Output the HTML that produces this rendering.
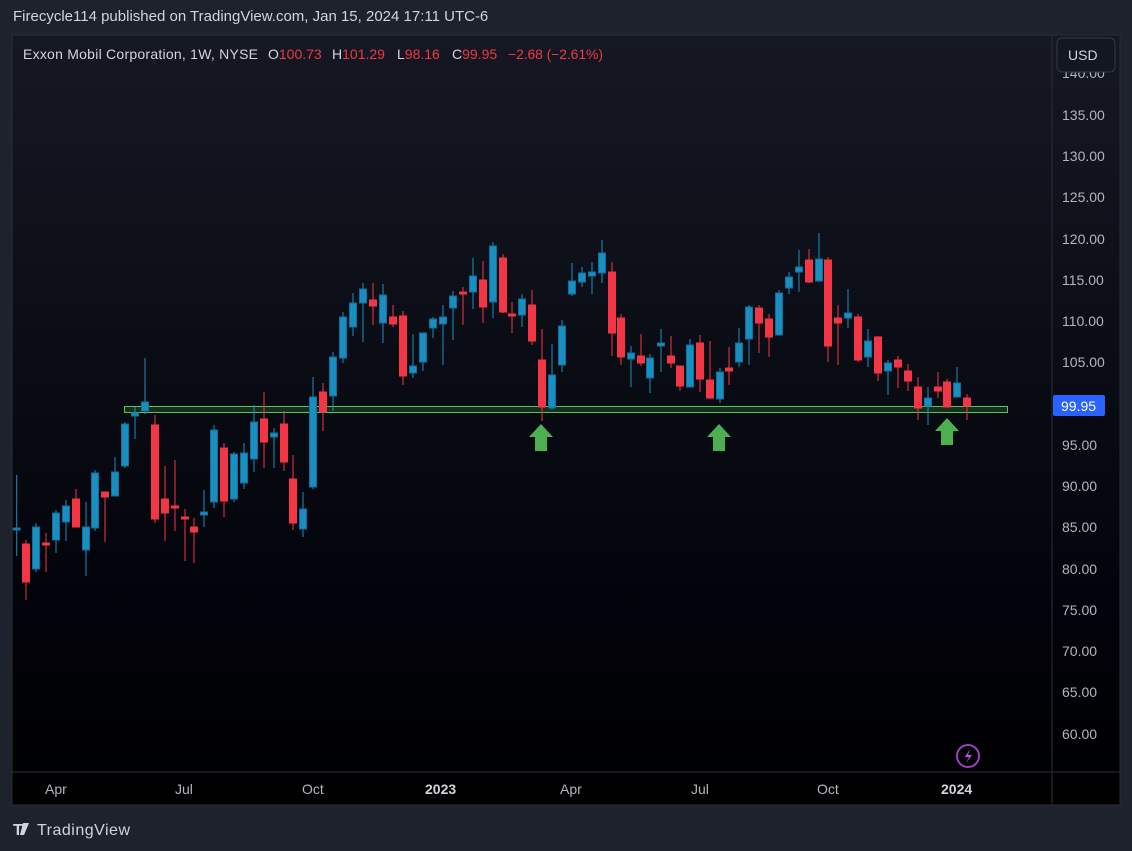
<!DOCTYPE html>
<html><head><meta charset="utf-8"><style>
html,body{margin:0;padding:0;background:#1e222d;width:1132px;height:851px;overflow:hidden;font-family:"Liberation Sans",sans-serif}
.t{position:absolute;left:13px;top:8px;color:#d1d4dc;font-size:15px}
#c{position:absolute;left:0;top:0}
</style></head><body>
<svg id="c" width="1132" height="851" xmlns="http://www.w3.org/2000/svg">
<defs><linearGradient id="g" x1="0" y1="0" x2="0" y2="1"><stop offset="0" stop-color="#151823"/><stop offset="0.75" stop-color="#02030a"/><stop offset="1" stop-color="#000"/></linearGradient></defs>
<rect x="12" y="35" width="1108" height="770" fill="url(#g)" stroke="#2a2e39"/>
<line x1="1052" y1="35" x2="1052" y2="805" stroke="#2a2e39"/>
<line x1="12" y1="772" x2="1120" y2="772" stroke="#2a2e39"/>
<rect x="124.5" y="406.5" width="883" height="6" fill="#14301a" stroke="#5cbf60" stroke-width="1"/>
<g id="cd"></g>
<g fill="#4caf50">
<path d="M541 424 L553 437 L547 437 L547 451 L535 451 L535 437 L529 437 Z"/>
<path d="M719 424 L731 437 L725 437 L725 451 L713 451 L713 437 L707 437 Z"/>
<path d="M947 418 L959 431 L953 431 L953 445 L941 445 L941 431 L935 431 Z"/>
</g>
<g font-size="14" fill="#b2b5be" font-family="Liberation Sans,sans-serif">
<text x="1062" y="78">140.00</text><text x="1062" y="120">135.00</text><text x="1062" y="161">130.00</text><text x="1062" y="202">125.00</text><text x="1062" y="244">120.00</text><text x="1062" y="285">115.00</text><text x="1062" y="326">110.00</text><text x="1062" y="367">105.00</text><text x="1062" y="450">95.00</text><text x="1062" y="491">90.00</text><text x="1062" y="532">85.00</text><text x="1062" y="574">80.00</text><text x="1062" y="615">75.00</text><text x="1062" y="656">70.00</text><text x="1062" y="697">65.00</text><text x="1062" y="739">60.00</text>
</g>
<rect x="1057" y="38" width="58" height="34" rx="5" fill="#131722" stroke="#363a45"/>
<text x="1068" y="60" font-size="14" fill="#d1d4dc">USD</text>
<rect x="1053" y="395" width="52" height="21" rx="2" fill="#2962ff"/>
<text x="1061" y="411" font-size="14" fill="#fff">99.95</text>
<g font-size="14" fill="#b2b5be">
<text x="45" y="794">Apr</text><text x="175" y="794">Jul</text><text x="302" y="794">Oct</text><text x="425" y="794" font-weight="bold" fill="#d1d4dc">2023</text><text x="560" y="794">Apr</text><text x="691" y="794">Jul</text><text x="817" y="794">Oct</text><text x="941" y="794" font-weight="bold" fill="#d1d4dc">2024</text>
</g>
<circle cx="968" cy="756" r="11" fill="none" stroke="#9c3fc0" stroke-width="2"/>
<path d="M970 749 L965 757 L969 757 L966 763 L972 755 L968 755 Z" fill="#b45ad8"/>
<g font-size="14" fill="#d1d4dc">
<text x="23" y="59" textLength="235">Exxon Mobil Corporation, 1W, NYSE</text>
<text x="268" y="59">O<tspan fill="#f23645">100.73</tspan></text>
<text x="332" y="59">H<tspan fill="#f23645">101.29</tspan></text>
<text x="397" y="59">L<tspan fill="#f23645">98.16</tspan></text>
<text x="452" y="59">C<tspan fill="#f23645">99.95</tspan></text>
<text x="508" y="59" fill="#f23645" textLength="95">−2.68 (−2.61%)</text>
</g>
<text x="13" y="835" font-size="16" font-weight="bold" fill="#d1d4dc">T</text>
<path d="M23 823 h6 l-5 12 h-4z" fill="#d1d4dc"/>
<text x="37" y="835" font-size="16" fill="#d1d4dc" textLength="93">TradingView</text>
</svg>
<div class="t">Firecycle114 published on TradingView.com, Jan 15, 2024 17:11 UTC-6</div>
<script>
var d=[[16.7,475,556,528,530,'b'],[26,540,600,544,582,'r'],[36,523,572,527,569,'b'],[46,533,572,543,545,'r'],[56,510,553,513,540,'b'],[66,500,541,506,522,'b'],[76,489,527,499,527,'r'],[86,502,576,527,550,'b'],[95,470,531,473,528,'b'],[105,492,542,492,497,'r'],[115,457,496,472,496,'b'],[125,422,468,424,466,'b'],[135,407,439,413,416,'b'],[145,358,414,402,411,'b'],[155,415,523,425,519,'r'],[165,466,541,499,513,'r'],[175,460,531,506,508,'r'],[185,509,561,517,519,'r'],[194,518,563,527,532,'r'],[204,490,527,512,515,'b'],[214,425,508,430,502,'b'],[224,443,517,448,501,'r'],[234,452,502,454,499,'b'],[244,443,489,453,483,'b'],[254,405,472,422,459,'b'],[264,392,468,419,442,'r'],[274,428,468,433,437,'b'],[284,411,471,424,462,'r'],[293,455,530,479,523,'r'],[303,492,537,509,529,'b'],[313,377,489,397,487,'b'],[323,383,431,392,412,'r'],[333,352,411,357,396,'b'],[343,312,363,317,358,'b'],[353,293,336,303,327,'b'],[363,283,342,289,303,'b'],[373,283,325,300,306,'r'],[383,284,343,295,323,'b'],[393,305,327,317,324,'r'],[403,311,385,316,376,'r'],[413,334,378,366,373,'b'],[423,333,371,333,362,'b'],[433,317,338,319,328,'b'],[443,305,365,317,324,'b'],[453,291,340,296,308,'b'],[463,287,325,292,294,'r'],[473,258,309,276,292,'b'],[483,261,323,280,307,'r'],[493,242,318,246,302,'b'],[503,254,313,258,312,'r'],[512,302,333,314,316,'r'],[522,294,327,299,315,'b'],[532,290,345,305,341,'r'],[542,329,421,360,407,'r'],[552,344,410,375,408,'b'],[562,320,372,326,365,'b'],[572,263,296,281,294,'b'],[582,267,287,273,282,'b'],[592,262,294,272,276,'b'],[602,240,283,253,273,'b'],[612,262,356,272,333,'r'],[621,314,365,318,357,'r'],[631,346,387,353,359,'b'],[641,334,366,356,363,'r'],[650,354,393,358,378,'b'],[661,329,372,343,346,'b'],[671,336,368,356,363,'r'],[680,366,391,366,386,'r'],[690,339,387,345,387,'b'],[700,335,392,343,379,'r'],[710,341,399,380,398,'r'],[720,368,403,372,399,'b'],[729,347,385,368,371,'r'],[739,328,367,343,362,'b'],[749,305,365,307,339,'b'],[759,305,353,308,323,'r'],[769,314,357,319,337,'r'],[779,290,335,293,335,'b'],[789,272,294,277,288,'b'],[799,250,292,267,272,'b'],[809,249,283,260,282,'r'],[819,233,282,259,281,'b'],[828,257,362,260,346,'r'],[838,305,365,318,323,'r'],[848,289,328,313,318,'b'],[858,314,362,317,360,'r'],[868,329,367,341,357,'b'],[878,336,381,337,373,'r'],[888,360,395,363,371,'b'],[898,356,388,360,367,'r'],[908,364,391,371,381,'r'],[918,377,420,387,408,'r'],[928,387,425,398,406,'b'],[938,372,398,387,391,'r'],[947,379,407,382,407,'r'],[957,367,397,383,397,'b'],[967,394,420,398,406,'r']];
var s='';d.forEach(function(c){var col=c[5]=='b'?'#1a8fbf':'#f23645',st=c[5]=='b'?'#0d6f9e':'#f23645';
s+='<line x1="'+c[0]+'" y1="'+c[1]+'" x2="'+c[0]+'" y2="'+c[2]+'" stroke="'+col+'" stroke-width="1"/>';
var h=Math.max(c[4]-c[3],2);s+='<rect x="'+(c[0]-3.5)+'" y="'+c[3]+'" width="7" height="'+h+'" fill="'+col+'" stroke="'+st+'" stroke-width="1"/>';});
document.getElementById('cd').innerHTML=s;
</script>
</body></html>
